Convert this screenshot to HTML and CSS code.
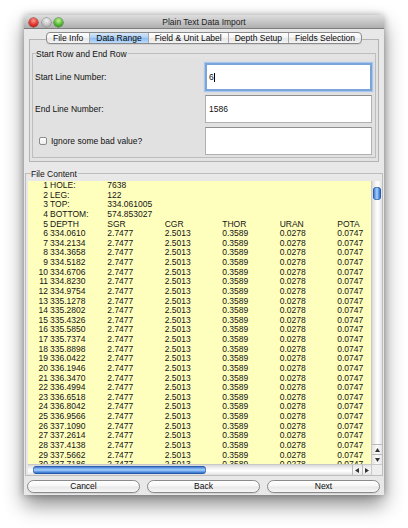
FILE: index.html
```html
<!DOCTYPE html>
<html>
<head>
<meta charset="utf-8">
<title>Plain Text Data Import</title>
<link rel="stylesheet" href="styles.css">
</head>
<body>
<div class="window">
  <div class="titlebar">
    <div class="lights">
      <span class="light red"></span>
      <span class="light gray"></span>
      <span class="light green"></span>
    </div>
    <div class="title">Plain Text Data Import</div>
    <div></div>
  </div>

  <div class="tabs-row">
    <div class="tabs">
      <span class="tab">File Info</span>
      <span class="tab selected">Data Range</span>
      <span class="tab">Field &amp; Unit Label</span>
      <span class="tab">Depth Setup</span>
      <span class="tab">Fields Selection</span>
    </div>
  </div>

  <div class="panel">
    <div class="group">
      <div class="group-title"><span>Start Row and End Row</span></div>
      <div class="group-body">
        <div class="form-row">
          <span class="label">Start Line Number:</span>
          <div class="field focused"><span>6</span><span class="caret"></span></div>
        </div>
        <div class="form-row">
          <span class="label">End Line Number:</span>
          <div class="field"><span>1586</span></div>
        </div>
        <div class="form-row">
          <span class="label check-label"><span class="checkbox"></span>Ignore some bad value?</span>
          <div class="field"></div>
        </div>
      </div>
    </div>
  </div>

  <div class="content-box">
    <div class="group-title wide"><span>File Content</span></div>
    <div class="content-body">
      <div class="scroll">
        <div class="viewport">
          <div class="r"><span>1</span><span>HOLE:</span><span>7638</span><span></span><span></span><span></span><span></span></div>
          <div class="r"><span>2</span><span>LEG:</span><span>122</span><span></span><span></span><span></span><span></span></div>
          <div class="r"><span>3</span><span>TOP:</span><span>334.061005</span><span></span><span></span><span></span><span></span></div>
          <div class="r"><span>4</span><span>BOTTOM:</span><span>574.853027</span><span></span><span></span><span></span><span></span></div>
          <div class="r"><span>5</span><span>DEPTH</span><span>SGR</span><span>CGR</span><span>THOR</span><span>URAN</span><span>POTA</span></div>
          <div class="r"><span>6</span><span>334.0610</span><span>2.7477</span><span>2.5013</span><span>0.3589</span><span>0.0278</span><span>0.0747</span></div>
          <div class="r"><span>7</span><span>334.2134</span><span>2.7477</span><span>2.5013</span><span>0.3589</span><span>0.0278</span><span>0.0747</span></div>
          <div class="r"><span>8</span><span>334.3658</span><span>2.7477</span><span>2.5013</span><span>0.3589</span><span>0.0278</span><span>0.0747</span></div>
          <div class="r"><span>9</span><span>334.5182</span><span>2.7477</span><span>2.5013</span><span>0.3589</span><span>0.0278</span><span>0.0747</span></div>
          <div class="r"><span>10</span><span>334.6706</span><span>2.7477</span><span>2.5013</span><span>0.3589</span><span>0.0278</span><span>0.0747</span></div>
          <div class="r"><span>11</span><span>334.8230</span><span>2.7477</span><span>2.5013</span><span>0.3589</span><span>0.0278</span><span>0.0747</span></div>
          <div class="r"><span>12</span><span>334.9754</span><span>2.7477</span><span>2.5013</span><span>0.3589</span><span>0.0278</span><span>0.0747</span></div>
          <div class="r"><span>13</span><span>335.1278</span><span>2.7477</span><span>2.5013</span><span>0.3589</span><span>0.0278</span><span>0.0747</span></div>
          <div class="r"><span>14</span><span>335.2802</span><span>2.7477</span><span>2.5013</span><span>0.3589</span><span>0.0278</span><span>0.0747</span></div>
          <div class="r"><span>15</span><span>335.4326</span><span>2.7477</span><span>2.5013</span><span>0.3589</span><span>0.0278</span><span>0.0747</span></div>
          <div class="r"><span>16</span><span>335.5850</span><span>2.7477</span><span>2.5013</span><span>0.3589</span><span>0.0278</span><span>0.0747</span></div>
          <div class="r"><span>17</span><span>335.7374</span><span>2.7477</span><span>2.5013</span><span>0.3589</span><span>0.0278</span><span>0.0747</span></div>
          <div class="r"><span>18</span><span>335.8898</span><span>2.7477</span><span>2.5013</span><span>0.3589</span><span>0.0278</span><span>0.0747</span></div>
          <div class="r"><span>19</span><span>336.0422</span><span>2.7477</span><span>2.5013</span><span>0.3589</span><span>0.0278</span><span>0.0747</span></div>
          <div class="r"><span>20</span><span>336.1946</span><span>2.7477</span><span>2.5013</span><span>0.3589</span><span>0.0278</span><span>0.0747</span></div>
          <div class="r"><span>21</span><span>336.3470</span><span>2.7477</span><span>2.5013</span><span>0.3589</span><span>0.0278</span><span>0.0747</span></div>
          <div class="r"><span>22</span><span>336.4994</span><span>2.7477</span><span>2.5013</span><span>0.3589</span><span>0.0278</span><span>0.0747</span></div>
          <div class="r"><span>23</span><span>336.6518</span><span>2.7477</span><span>2.5013</span><span>0.3589</span><span>0.0278</span><span>0.0747</span></div>
          <div class="r"><span>24</span><span>336.8042</span><span>2.7477</span><span>2.5013</span><span>0.3589</span><span>0.0278</span><span>0.0747</span></div>
          <div class="r"><span>25</span><span>336.9566</span><span>2.7477</span><span>2.5013</span><span>0.3589</span><span>0.0278</span><span>0.0747</span></div>
          <div class="r"><span>26</span><span>337.1090</span><span>2.7477</span><span>2.5013</span><span>0.3589</span><span>0.0278</span><span>0.0747</span></div>
          <div class="r"><span>27</span><span>337.2614</span><span>2.7477</span><span>2.5013</span><span>0.3589</span><span>0.0278</span><span>0.0747</span></div>
          <div class="r"><span>28</span><span>337.4138</span><span>2.7477</span><span>2.5013</span><span>0.3589</span><span>0.0278</span><span>0.0747</span></div>
          <div class="r"><span>29</span><span>337.5662</span><span>2.7477</span><span>2.5013</span><span>0.3589</span><span>0.0278</span><span>0.0747</span></div>
          <div class="r"><span>30</span><span>337.7186</span><span>2.7477</span><span>2.5013</span><span>0.3589</span><span>0.0278</span><span>0.0747</span></div>
        </div>
        <div class="vscroll">
          <div class="vtrack"><span class="vthumb"></span></div>
          <div class="arrow-btn v">
            <svg width="5" height="4" viewBox="0 0 5 4"><path d="M2.5 0 L5 4 L0 4 Z" fill="#333"/></svg>
          </div>
          <div class="arrow-btn v">
            <svg width="5" height="4" viewBox="0 0 5 4"><path d="M0 0 L5 0 L2.5 4 Z" fill="#333"/></svg>
          </div>
        </div>
        <div class="hscroll">
          <div class="htrack"><span class="hthumb"></span></div>
          <div class="arrow-btn h">
            <svg width="4" height="5" viewBox="0 0 4 5"><path d="M0 2.5 L4 0 L4 5 Z" fill="#333"/></svg>
          </div>
          <div class="arrow-btn h">
            <svg width="4" height="5" viewBox="0 0 4 5"><path d="M0 0 L4 2.5 L0 5 Z" fill="#333"/></svg>
          </div>
        </div>
        <div class="corner"></div>
      </div>
    </div>
  </div>

  <div class="buttons">
    <span class="btn">Cancel</span>
    <span class="btn">Back</span>
    <span class="btn">Next</span>
  </div>
</div>
</body>
</html>
```

FILE: styles.css
```css
* { box-sizing: border-box; }

body {
  margin: 0;
  width: 408px;
  height: 528px;
  background: #ffffff;
  font-family: "Liberation Sans", Arial, sans-serif;
  font-size: 8.5px;
  color: #111111;
  overflow: hidden;
}

.window {
  margin: 15px 0 0 24px;
  width: 360px;
  height: 480px;
  background: #e8e8e8;
  border-radius: 4px 4px 0 0;
  box-shadow: 0 10px 20px rgba(0, 0, 0, 0.45), 0 0 7px rgba(0, 0, 0, 0.3);
  display: flex;
  flex-direction: column;
}

/* title bar */
.titlebar {
  height: 14px;
  display: grid;
  grid-template-columns: 1fr auto 1fr;
  align-items: center;
  background: linear-gradient(#dedede, #c2c2c2 60%, #afafaf);
  border-bottom: 1px solid #7d7d7d;
  border-radius: 4px 4px 0 0;
}

.lights {
  display: flex;
  gap: 3.5px;
  padding-left: 5px;
}

.light {
  width: 9px;
  height: 9px;
  border-radius: 50%;
}

.light.red {
  background: radial-gradient(circle at 50% 30%, #ff9a8f, #e0322a 55%, #9c1410);
  box-shadow: 0 0 0 0.5px #7a1a15;
}

.light.gray {
  background: radial-gradient(circle at 50% 30%, #f2f2f2, #c4c4c4 55%, #8f8f8f);
  box-shadow: 0 0 0 0.5px #777;
}

.light.green {
  background: radial-gradient(circle at 50% 30%, #c9f59a, #53b832 55%, #247512);
  box-shadow: 0 0 0 0.5px #2a6a1a;
}

.title {
  color: #222222;
  line-height: 14px;
}

/* tabs */
.tabs-row {
  margin-top: 3px;
  height: 12px;
  display: flex;
  justify-content: center;
  position: relative;
  z-index: 1;
}

.tabs {
  display: flex;
  border: 1px solid #8a8a8a;
  border-radius: 4px;
  background: linear-gradient(#ffffff, #f3f3f3 50%, #e6e6e6 51%, #f4f4f4);
  overflow: hidden;
  box-shadow: 0 1px 0 rgba(0,0,0,0.08);
}

.tab {
  padding: 0 6px;
  line-height: 10px;
  color: #0a0a0a;
  border-left: 1px solid #a8a8a8;
}

.tab:first-child { border-left: none; }

.tab.selected {
  background: linear-gradient(#d6e8fa, #a9cdf3 50%, #8cbcef 51%, #bcdcfb);
}

/* tab panel */
.panel {
  margin: -5px 5px 0;
  border: 1px solid #b4b4b4;
  background: #e3e3e3;
  padding: 9px 2px 3px;
}

.group-title {
  height: 10px;
  display: flex;
  align-items: stretch;
  line-height: 10px;
  color: #111111;
}

.group-title::before {
  content: "";
  width: 3px;
  height: 5px;
  align-self: flex-end;
  border-top: 1px solid #bdbdbd;
  border-left: 1px solid #bdbdbd;
}

.group-title::after {
  content: "";
  flex: 1;
  height: 5px;
  align-self: flex-end;
  border-top: 1px solid #bdbdbd;
  border-right: 1px solid #bdbdbd;
  margin-left: 1px;
}

.group-title.wide::before { width: 5px; }

.group-body {
  border: 1px solid #bdbdbd;
  border-top: none;
  padding: 4px 3px 2px 2px;
  display: flex;
  flex-direction: column;
  gap: 4px;
  background: #e1e1e1;
}

.form-row {
  display: grid;
  grid-template-columns: 1fr 167px;
  align-items: center;
}

.label { color: #111111; }

.check-label {
  display: flex;
  align-items: center;
  padding-left: 4px;
  gap: 4px;
}

.checkbox {
  width: 8px;
  height: 8px;
  border: 1px solid #8c8c8c;
  border-radius: 2px;
  background: linear-gradient(#ffffff, #ececec);
}

.field {
  height: 28px;
  background: #ffffff;
  border: 1px solid #b0b0b0;
  border-top-color: #8e8e8e;
  display: flex;
  align-items: center;
  padding-left: 3px;
  color: #111111;
}

.field.focused {
  border: 2px solid #7ba4da;
  box-shadow: 0 0 1px 1px #a9c6ee;
  padding-left: 2px;
}

.caret {
  width: 1px;
  height: 9px;
  background: #000;
  margin-left: 0.5px;
}

/* file content */
.content-box {
  margin: 7px 1px 0;
}

.content-body {
  border: 1px solid #bdbdbd;
  border-top: none;
  padding: 2px 0 0 2px;
}

.scroll {
  height: 294px;
  display: grid;
  grid-template-columns: 343px 11px;
  grid-template-rows: 283px 11px;
}

.viewport {
  background: #ffffbd;
  overflow: hidden;
  color: #141414;
}

.r {
  display: grid;
  grid-template-columns: 20px 59.3px 57.4px 57.6px 57.4px 57.6px 1fr;
  height: 9.64px;
  line-height: 9.64px;
  white-space: nowrap;
}

.r span:first-child { text-align: right; }
.r span:nth-child(2) { padding-left: 2px; }

.vscroll {
  display: flex;
  flex-direction: column;
  background: linear-gradient(90deg, #d9d9d9, #f7f7f7 40%, #ffffff 60%, #e0e0e0);
  border-left: 1px solid #c8c8c8;
}

.vtrack {
  flex: 1;
  padding: 6px 1px 0 1px;
}

.vthumb {
  display: block;
  width: 8px;
  height: 13px;
  border-radius: 4px;
  background: linear-gradient(90deg, #2b5fb8, #7fb3f2 35%, #a9d0fb 50%, #4c8de0 75%, #2457ad);
  box-shadow: inset 0 0 0 0.5px #1f4d99;
}

.arrow-btn {
  display: flex;
  align-items: center;
  justify-content: center;
  background: linear-gradient(90deg, #e2e2e2, #fbfbfb 50%, #e4e4e4);
}

.arrow-btn.v {
  height: 10px;
  border-top: 1px solid #b9b9b9;
}

.hscroll {
  display: flex;
  background: linear-gradient(#d9d9d9, #f7f7f7 40%, #ffffff 60%, #e0e0e0);
  border-top: 1px solid #c8c8c8;
}

.htrack {
  flex: 1;
  padding: 1px 0 0 5px;
}

.hthumb {
  display: block;
  width: 173px;
  height: 8px;
  border-radius: 4px;
  background: linear-gradient(#2b5fb8, #7fb3f2 35%, #a9d0fb 50%, #4c8de0 75%, #2457ad);
  box-shadow: inset 0 0 0 0.5px #1f4d99;
}

.arrow-btn.h {
  width: 9.5px;
  border-left: 1px solid #b9b9b9;
  background: linear-gradient(#e2e2e2, #fbfbfb 50%, #e4e4e4);
}

.corner {
  background: #eeeeee;
  border-top: 1px solid #c8c8c8;
  border-left: 1px solid #c8c8c8;
}

/* buttons */
.buttons {
  display: flex;
  gap: 7px;
  padding: 4px 4px 0 3px;
}

.btn {
  flex: 1;
  height: 13px;
  line-height: 11px;
  text-align: center;
  border: 1px solid #8a8a8a;
  border-radius: 7px;
  background: linear-gradient(#ffffff, #f6f6f6 45%, #e9e9e9 55%, #f7f7f7);
  color: #0a0a0a;
  box-shadow: 0 1px 0 rgba(0,0,0,0.08);
}
```
